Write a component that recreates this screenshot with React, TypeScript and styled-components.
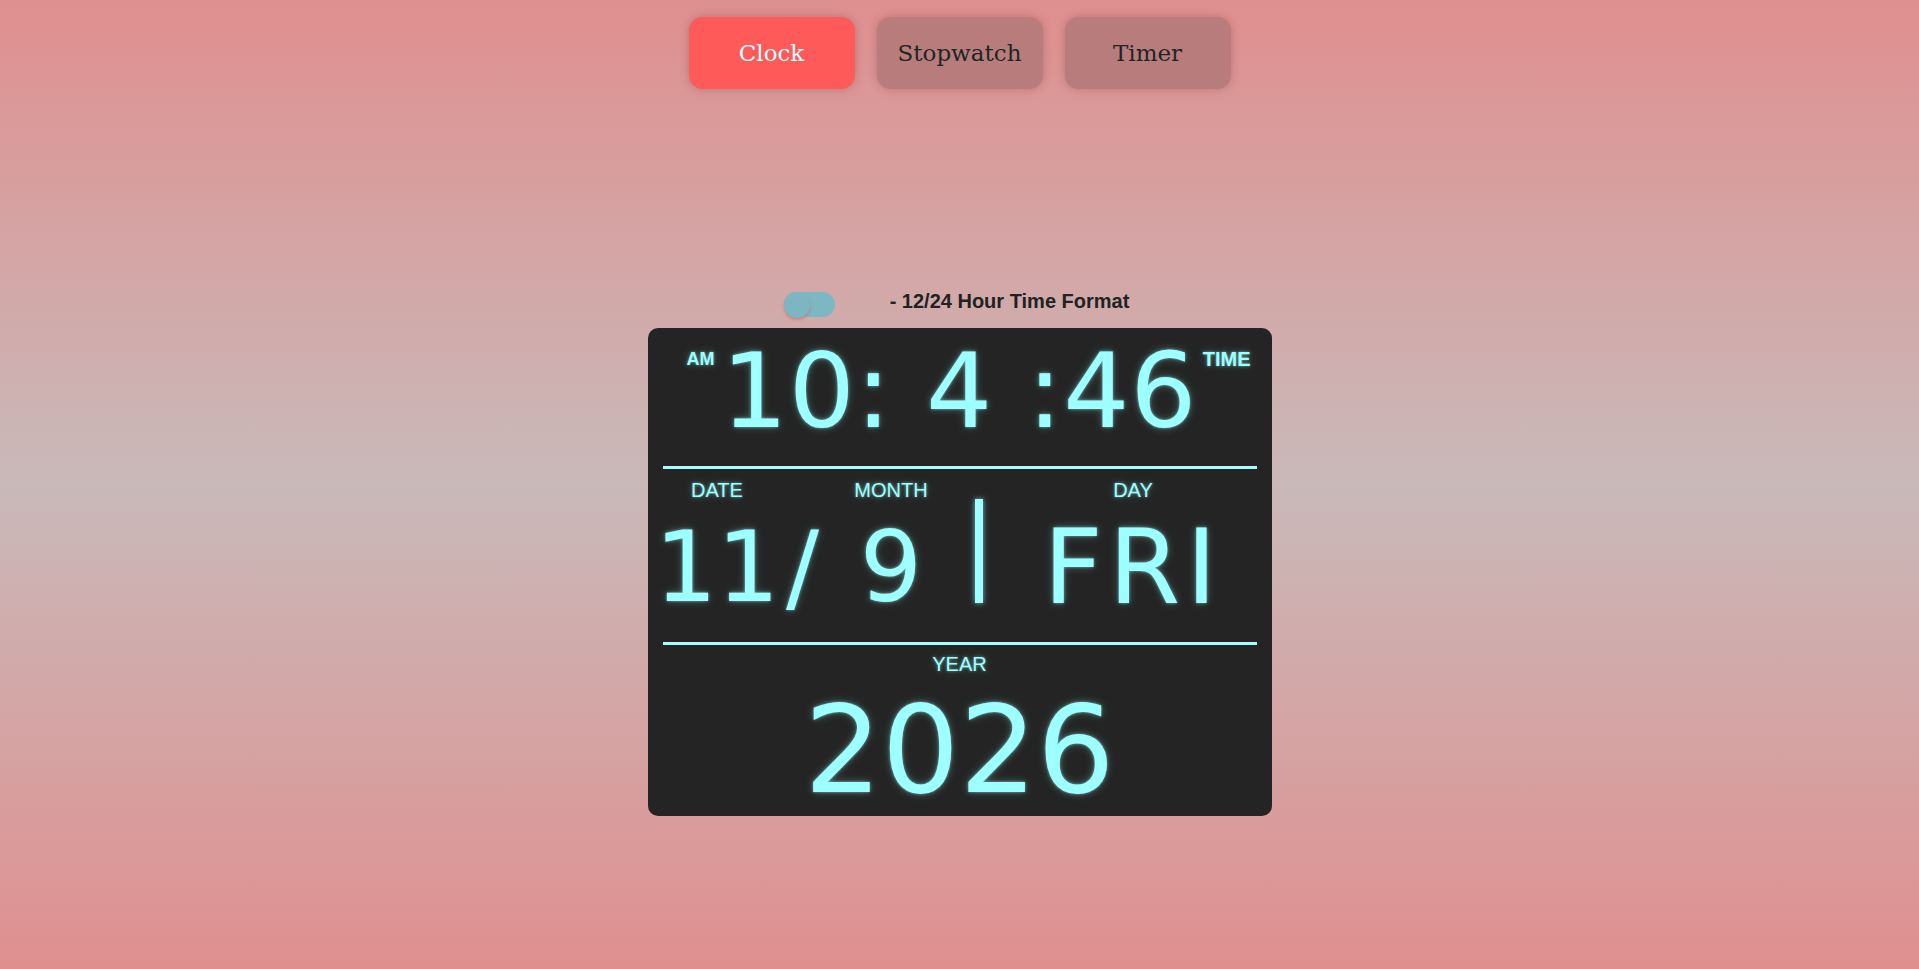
import React, { FC } from 'react';
import styled, { createGlobalStyle, css } from 'styled-components';

const GlobalStyle = createGlobalStyle`
  html, body {
    margin: 0;
    padding: 0;
    height: 100%;
  }
  body {
    background: linear-gradient(to bottom, #e08f8f 0%, #c9b9b9 50%, #e08f8f 100%);
    font-family: 'Liberation Sans', Arial, sans-serif;
  }
`;

const glow = css`
  color: #9dffff;
  text-shadow: 0 0 3px rgba(157, 255, 255, 0.55), 0 0 8px rgba(157, 255, 255, 0.3);
`;

const Page = styled.div`
  min-height: 100vh;
  display: flex;
  flex-direction: column;
  align-items: center;
`;

const Nav = styled.nav`
  display: flex;
  gap: 22px;
  padding-top: 17px;
`;

const NavButton = styled.button<{ $active?: boolean }>`
  width: 166px;
  height: 72px;
  border: none;
  border-radius: 14px;
  font-family: 'DejaVu Serif', 'Liberation Serif', serif;
  font-size: 23px;
  cursor: pointer;
  background: ${(p) => (p.$active ? '#ff5a5a' : '#b97c7c')};
  color: ${(p) => (p.$active ? '#ccffff' : '#1e2626')};
  box-shadow: 0 0 10px rgba(110, 40, 40, 0.3);
`;

const FormatRow = styled.div`
  display: flex;
  align-items: center;
  gap: 55px;
  margin-top: 202px;
  margin-right: 6px;
  height: 26px;
`;

const Toggle = styled.div`
  position: relative;
  width: 51px;
  height: 25px;
  border-radius: 13px;
  background: #7db7c1;

  &::before {
    content: '';
    position: absolute;
    left: 0;
    top: 0;
    width: 26px;
    height: 26px;
    border-radius: 50%;
    background: #7cb6c0;
    box-shadow: 0 2px 3px rgba(220, 80, 80, 0.45);
  }
`;

const FormatLabel = styled.span`
  font-weight: bold;
  font-size: 20px;
  color: #222;
  margin-bottom: 5px;
`;

const Panel = styled.div`
  margin-top: 11px;
  width: 624px;
  height: 488px;
  box-sizing: border-box;
  padding: 11px 15px 0;
  background: #242424;
  border-radius: 10px;
  display: flex;
  flex-direction: column;
`;

const TimeRow = styled.div`
  display: grid;
  grid-template-columns: 1fr auto 1fr;
  margin: 0 -15px;
`;

const Tag = styled.span<{ $side: 'left' | 'right' }>`
  ${glow};
  font-size: ${(p) => (p.$side === 'left' ? 18 : 20)}px;
  line-height: 22px;
  font-weight: bold;
  margin-top: 9px;
  align-self: start;
  justify-self: ${(p) => (p.$side === 'left' ? 'start' : 'end')};
  ${(p) => (p.$side === 'left' ? 'margin-left: 39px;' : 'margin-right: 21px;')}
`;

const BigText = styled.span<{ $size: number; $lh?: number; $spacing?: number }>`
  ${glow};
  display: block;
  font-family: 'DejaVu Sans', sans-serif;
  font-size: ${(p) => p.$size}px;
  line-height: ${(p) => (p.$lh ? `${p.$lh}px` : 1)};
  letter-spacing: ${(p) => p.$spacing ?? 0}px;
  white-space: pre;
`;

const Divider = styled.div<{ $gap: number }>`
  height: 3px;
  background: #a8fdfd;
  margin-top: ${(p) => p.$gap}px;
  flex-shrink: 0;
`;

const Label = styled.span`
  ${glow};
  font-size: 20px;
  line-height: 22px;
`;

const DateGrid = styled.div`
  display: grid;
  grid-template-columns: 109px 62px 115px 61px 1fr;
  grid-template-rows: 22px 101px;
  row-gap: 16px;
  margin-top: 10px;
  justify-items: center;
`;

const Cell = styled.div<{ $col: number; $row: number }>`
  grid-column: ${(p) => p.$col};
  grid-row: ${(p) => p.$row};
`;

const Bar = styled.div`
  grid-column: 4;
  grid-row: 1 / span 2;
  align-self: end;
  width: 8px;
  height: 104px;
  margin-bottom: 15px;
  background: #9dffff;
  box-shadow: 0 0 4px rgba(157, 255, 255, 0.5), 0 0 9px rgba(157, 255, 255, 0.3);
`;

const YearBlock = styled.div`
  display: flex;
  flex-direction: column;
  align-items: center;
  margin-top: 8px;
  gap: 14px;
`;

const tabs = ['Clock', 'Stopwatch', 'Timer'];

const App: FC = () => {
  return (
    <>
      <GlobalStyle />
      <Page>
        <Nav>
          {tabs.map((t) => (
            <NavButton key={t} $active={t === 'Clock'}>
              {t}
            </NavButton>
          ))}
        </Nav>

        <FormatRow>
          <Toggle />
          <FormatLabel>- 12/24 Hour Time Format</FormatLabel>
        </FormatRow>

        <Panel>
          <TimeRow>
            <Tag $side="left">AM</Tag>
            <BigText $size={104} $spacing={1}>{'10: 4 :46'}</BigText>
            <Tag $side="right">TIME</Tag>
          </TimeRow>

          <Divider $gap={23} />

          <DateGrid>
            <Cell $col={1} $row={1}><Label>DATE</Label></Cell>
            <Cell $col={3} $row={1}><Label>MONTH</Label></Cell>
            <Cell $col={5} $row={1}><Label>DAY</Label></Cell>
            <Cell $col={1} $row={2}><BigText $size={98} $lh={101}>11</BigText></Cell>
            <Cell $col={2} $row={2}><BigText $size={98} $lh={101}>/</BigText></Cell>
            <Cell $col={3} $row={2}><BigText $size={98} $lh={101}>9</BigText></Cell>
            <Bar />
            <Cell $col={5} $row={2}>
              <BigText $size={103} $lh={101} $spacing={6}>FRI</BigText>
            </Cell>
          </DateGrid>

          <Divider $gap={24} />

          <YearBlock>
            <Label>YEAR</Label>
            <BigText $size={122}>2026</BigText>
          </YearBlock>
        </Panel>
      </Page>
    </>
  );
};

export default App;
